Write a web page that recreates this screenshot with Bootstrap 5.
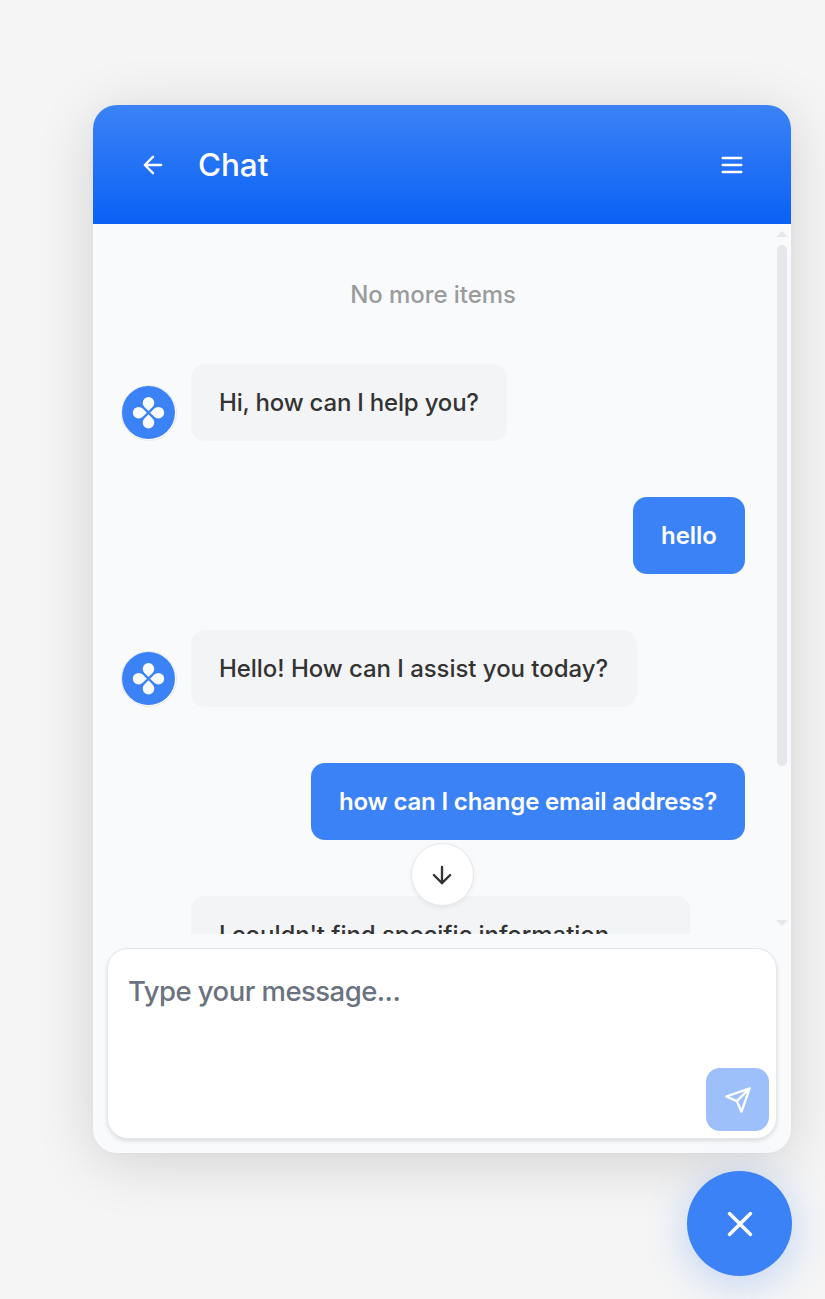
<!DOCTYPE html>
<html lang="en">
<head>
<meta charset="utf-8">
<meta name="viewport" content="width=device-width, initial-scale=1">
<title>Chat</title>
<link href="https://cdn.jsdelivr.net/npm/bootstrap@5.3.0/dist/css/bootstrap.min.css" rel="stylesheet">
<style>
  body { background: #f5f5f5; font-family: Inter, "Liberation Sans", sans-serif; overflow: hidden; color: #333; }
  .stage { width: 792px; height: 1299px; padding: 105px 1px 0 93px; }
  .chat-panel { height: 1048px; border-radius: 24px; background: #f9fafc; box-shadow: 0 9px 60px rgba(0,0,0,.14), 0 0 8px rgba(0,0,0,.025); }
  .chat-head { height: 119px; padding: 0 45px 0 46px; background: linear-gradient(#3b82f6, #0b61f5); color: #fff; flex: none; }
  .chat-title { font-size: 31.5px; font-weight: 500; line-height: 1; margin-left: 31px; letter-spacing: -.1px; }
  .plain-btn { background: none; border: 0; padding: 0; color: inherit; line-height: 0; }
  svg.line-icon { fill: none; stroke: currentColor; stroke-width: 2; stroke-linecap: round; stroke-linejoin: round; display: block; }
  .chat-body { height: 710px; flex: none; }
  .thread { width: 680px; padding: 0 28px; font-size: 24px; line-height: 35px; font-weight: 500; }
  .end-note { height: 140px; color: #999c9b; letter-spacing: -.07px; }
  .thread-rows { gap: 56px; }
  .bubble { min-height: 77px; padding: 21px 28px; border-radius: 14px; background: #f3f4f6; white-space: nowrap; }
  .bubble-user { background: #3b82f6; color: #fff; font-weight: 600; }
  .bubble-long { width: 499px; min-height: 180px; letter-spacing: -.06px; }
  .t1 { width: 316px; letter-spacing: -.2px; } .t2 { width: 112px; letter-spacing: -.05px; } .t3 { width: 446px; letter-spacing: -.05px; } .t4 { width: 434px; letter-spacing: -.17px; }
  .avatar { width: 56px; height: 56px; flex: none; }
  .bot-row { gap: 14px; }
  .bot-row-follow { padding-left: 70px; }
  .track { width: 18px; padding: 7px 3px 8px 3px; }
  .thumb { width: 10px; height: 521px; border-radius: 5px; background: #e5e7eb; margin-top: 8px; }
  .jump { width: 63px; height: 63px; left: 317.5px; top: 619px; background: #fff; border: 1px solid #e5e7eb; border-radius: 50%; box-shadow: 0 2px 5px rgba(0,0,0,.06); color: #333; }
  .composer { margin: 14px; height: 191px; border: 1px solid #e5e7eb; border-radius: 21px; background: #fff; box-shadow: 0 2px 4px rgba(0,0,0,.12); padding: 22px 7px 7px 20px; }
  .prompt-text { font-size: 27.5px; line-height: 41px; color: #6b7280; font-weight: 500; letter-spacing: -.54px; }
  .send { width: 63px; height: 63px; border-radius: 14px; background: #9dbffa; color: #fff; }
  .closer { width: 105px; height: 105px; margin-top: 18px; border-radius: 50%; background: #3b82f6; color: #fff; box-shadow: 0 7px 40px rgba(59,130,246,.3); margin-right: -1px; position: relative; }
</style>
</head>
<body>
<svg width="0" height="0" class="position-absolute">
  <symbol id="clover" viewBox="0 0 56 56">
    <circle cx="28" cy="28" r="27.5" fill="#fff" stroke="#e5e7eb"/>
    <circle cx="27.5" cy="27.5" r="26.5" fill="#3b82f6"/>
    <g fill="#f9fafc" transform="translate(27.5 27.7)">
      <path id="petal" d="M0-1.6-4.1-5.8a5.8 5.8 0 1 1 8.2 0Z"/>
      <use href="#petal" transform="rotate(90)"/><use href="#petal" transform="rotate(180)"/><use href="#petal" transform="rotate(270)"/>
    </g>
  </symbol>
</svg>
<main class="stage">
  <section class="chat-panel d-flex flex-column overflow-hidden">
    <header class="chat-head d-flex align-items-center">
      <button class="plain-btn" aria-label="Back"><svg class="line-icon" width="28" height="28" viewBox="0 0 24 24"><path d="m12 19-7-7 7-7M19 12H5"/></svg></button>
      <h1 class="chat-title mb-0">Chat</h1>
      <button class="plain-btn ms-auto" aria-label="Menu"><svg class="line-icon" width="28" height="28" viewBox="0 0 24 24"><path d="M4 6h16M4 12h16M4 18h16"/></svg></button>
    </header>
    <div class="chat-body d-flex position-relative">
      <div class="thread overflow-hidden">
        <div class="end-note d-flex align-items-center justify-content-center">No more items</div>
        <div class="thread-rows d-flex flex-column">
          <div class="bot-row d-flex align-items-end"><svg class="avatar"><use href="#clover"/></svg><div class="bubble t1">Hi, how can I help you?</div></div>
          <div class="d-flex justify-content-end"><div class="bubble bubble-user t2">hello</div></div>
          <div class="bot-row d-flex align-items-end"><svg class="avatar"><use href="#clover"/></svg><div class="bubble t3">Hello! How can I assist you today?</div></div>
          <div class="d-flex justify-content-end"><div class="bubble bubble-user t4">how can I change email address?</div></div>
          <div class="bot-row-follow d-flex"><div class="bubble bubble-long">I couldn't find specific information</div></div>
        </div>
      </div>
      <div class="track d-flex flex-column align-items-center">
        <svg width="12" height="6"><path d="M0 6 6 0l6 6Z" fill="#e5e7eb"/></svg>
        <div class="thumb"></div>
        <svg class="mt-auto" width="12" height="6"><path d="M0 0h12L6 6Z" fill="#e5e7eb"/></svg>
      </div>
      <button class="jump position-absolute p-0 d-flex align-items-center justify-content-center" aria-label="Scroll down"><svg class="line-icon" width="28" height="28" viewBox="0 0 24 24"><path d="M12 5v14M19 12l-7 7-7-7"/></svg></button>
    </div>
    <div class="composer d-flex flex-column">
      <div class="prompt-text">Type your message...</div>
      <button class="send plain-btn mt-auto ms-auto d-flex align-items-center justify-content-center" aria-label="Send"><svg class="line-icon" width="28" height="28" viewBox="0 0 24 24"><path d="m22 2-7 20-4-9-9-4ZM22 2 11 13"/></svg></button>
    </div>
  </section>
  <button class="closer plain-btn ms-auto d-flex align-items-center justify-content-center" aria-label="Close"><svg class="line-icon" width="42" height="42" viewBox="0 0 24 24"><path d="M18 6 6 18M6 6l12 12"/></svg></button>
</main>
<script src="https://cdn.jsdelivr.net/npm/bootstrap@5.3.0/dist/js/bootstrap.bundle.min.js"></script>
</body>
</html>
